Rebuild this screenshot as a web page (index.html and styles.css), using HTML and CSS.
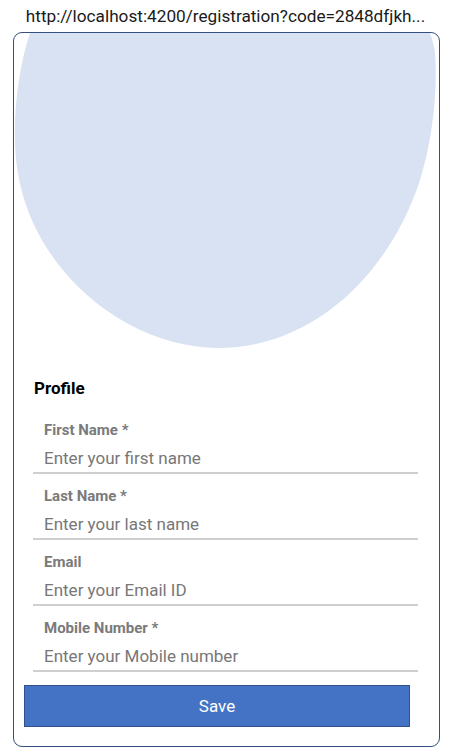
FILE: index.html
```html
<!DOCTYPE html>
<html lang="en">
<head>
<meta charset="utf-8">
<title>Registration</title>
<link rel="stylesheet" href="styles.css">
</head>
<body>
<div class="url">http://localhost:4200/registration?code=2848dfjkh...</div>
<div class="card">
  <svg class="blob" viewBox="0 0 425 316" width="425" height="316" aria-hidden="true">
    <path d="M16,0 C6,30 0,70 1,107 C2,230 110,315 204,315 C300,315 375,240 405,150 C418,110 424,60 421,20 C420,12 418,5 416,0 Z" fill="#d9e2f3"/>
  </svg>
  <form class="form">
    <h2 class="title">Profile</h2>
    <div class="field">
      <label class="label">First Name *</label>
      <input class="input" type="text" placeholder="Enter your first name">
    </div>
    <div class="field">
      <label class="label">Last Name *</label>
      <input class="input" type="text" placeholder="Enter your last name">
    </div>
    <div class="field">
      <label class="label">Email</label>
      <input class="input" type="text" placeholder="Enter your Email ID">
    </div>
    <div class="field">
      <label class="label">Mobile Number *</label>
      <input class="input" type="text" placeholder="Enter your Mobile number">
    </div>
    <button class="save" type="button">Save</button>
  </form>
</div>
</body>
</html>
```
FILE: styles.css
```css
html, body {
  margin: 0;
  padding: 0;
  background: #ffffff;
  font-family: Roboto, "Liberation Sans", Arial, sans-serif;
}

.url {
  height: 32px;
  line-height: 32px;
  font-size: 17.2px;
  color: #1a1a1a;
  text-align: center;
  white-space: nowrap;
}

.card {
  margin-left: 13px;
  width: 427px;
  height: 715px;
  box-sizing: border-box;
  border: 1px solid #34507e;
  border-radius: 9px;
  overflow: hidden;
  display: flex;
  flex-direction: column;
}

.blob {
  display: block;
  flex: none;
}

.form {
  display: flex;
  flex-direction: column;
  padding: 29px 0 0 0;
  margin: 0;
}

.title {
  margin: 0 0 22px 20px;
  font-size: 17px;
  line-height: 20px;
  font-weight: 700;
  color: #000;
}

.field {
  display: flex;
  flex-direction: column;
  margin: 0 21px 12px 19px;
  border-bottom: 2px solid #cfcfcf;
}

.label {
  padding-left: 11px;
  font-size: 15px;
  line-height: 20px;
  font-weight: 700;
  color: #7a7a7a;
}

.input {
  height: 28px;
  border: 0;
  outline: none;
  padding: 0 0 0 11px;
  margin: 4px 0 0 0;
  font-family: inherit;
  font-size: 17px;
  color: #333;
  background: transparent;
}

.input::placeholder {
  color: #777;
}

.save {
  margin: 1px 0 0 10px;
  width: 386px;
  height: 42px;
  background: #4472c4;
  border: 1px solid #2f528f;
  color: #fff;
  font-family: inherit;
  font-size: 17px;
  padding: 0;
}
```
